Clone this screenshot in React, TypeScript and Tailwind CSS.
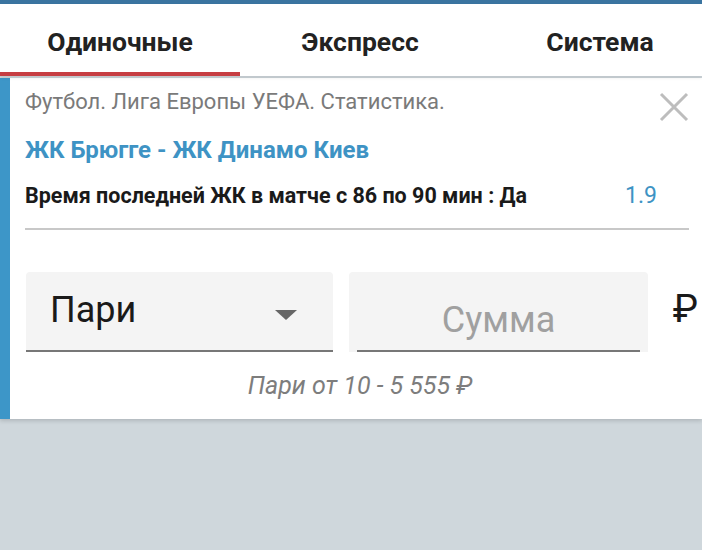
export default function App() {
  const tabs = ["Одиночные", "Экспресс", "Система"];

  return (
    <main className="w-[702px] h-[550px] bg-[#cfd7dc] overflow-hidden" style={{ fontFamily: "Roboto, 'Liberation Sans', sans-serif" }}>
      <div className="h-[4px] bg-[#3a74a0]" />
      <div className="flex h-[72px] bg-white shadow-[0_2px_3px_rgba(0,0,0,0.08)] relative z-10 overflow-hidden">
        {tabs.map((t, i) => (
          <div key={t} className="w-[240px] shrink-0 flex flex-col">
            <div className="flex-1 flex items-center justify-center text-[26.5px] font-bold text-[#222] pt-[8px]">{t}</div>
            <div className={i === 0 ? "h-[4px] bg-[#c63d42]" : "h-[4px]"} />
          </div>
        ))}
      </div>

      <div className="flex bg-white mt-[2px] shadow-[0_2px_4px_rgba(0,0,0,0.15)]">
        <div className="w-[10px] bg-[#3d96c8]" />
        <div className="flex-1 pl-[15px] pr-[13px] pt-[11px] pb-[18px]">
          <div className="flex justify-between items-start">
            <div className="text-[22px] text-[#7a7a7a] leading-[26px]">Футбол. Лига Европы УЕФА. Статистика.</div>
            <svg width="30" height="30" viewBox="0 0 30 30" className="mt-[3px]">
              <path d="M2 2 L28 28 M28 2 L2 28" stroke="#bdbdbd" strokeWidth="3" />
            </svg>
          </div>
          <div className="text-[24px] font-bold text-[#3e93c4] leading-[28px] mt-[14px]">ЖК Брюгге - ЖК Динамо Киев</div>
          <div className="flex justify-between items-center mt-[18px] pr-[32px]">
            <div className="text-[21.5px] font-bold text-[#1a1a1a] leading-[28px]">Время последней ЖК в матче с 86 по 90 мин : Да</div>
            <div className="text-[23px] text-[#3e93c4] leading-[28px]">1.9</div>
          </div>
          <div className="h-[2px] bg-[#c8c8c8] mt-[18px]" />

          <div className="flex items-stretch mt-[42px]">
            <div className="w-[307px] h-[80px] ml-[1px] bg-[#f4f4f4] rounded-t-[4px] border-b-2 border-[#777] flex items-center justify-between pl-[24px] pr-[36px]">
              <span className="text-[36px] text-[#1a1a1a] -mt-[2px]">Пари</span>
              <span className="w-0 h-0 border-l-[11px] border-r-[11px] border-t-[10px] border-l-transparent border-r-transparent border-t-[#666] mt-[8px]" />
            </div>
            <div className="w-[299px] h-[80px] ml-[16px] bg-[#f4f4f4] rounded-t-[4px] px-[8px] flex flex-col">
              <div className="flex-1 flex items-center justify-center text-[36px] text-[#a0a0a0] pt-[18px]">Сумма</div>
              <div className="h-[2px] bg-[#777]" />
            </div>
            <div className="flex-1 flex items-center justify-end text-[38px] text-[#1a1a1a] -mt-[6px] -mr-[9px]">₽</div>
          </div>

          <div className="text-center text-[25px] italic text-[#7d7d7d] mt-[19px] pl-[6px] leading-[30px]">Пари от 10 - 5 555 ₽</div>
        </div>
      </div>
    </main>
  );
}
